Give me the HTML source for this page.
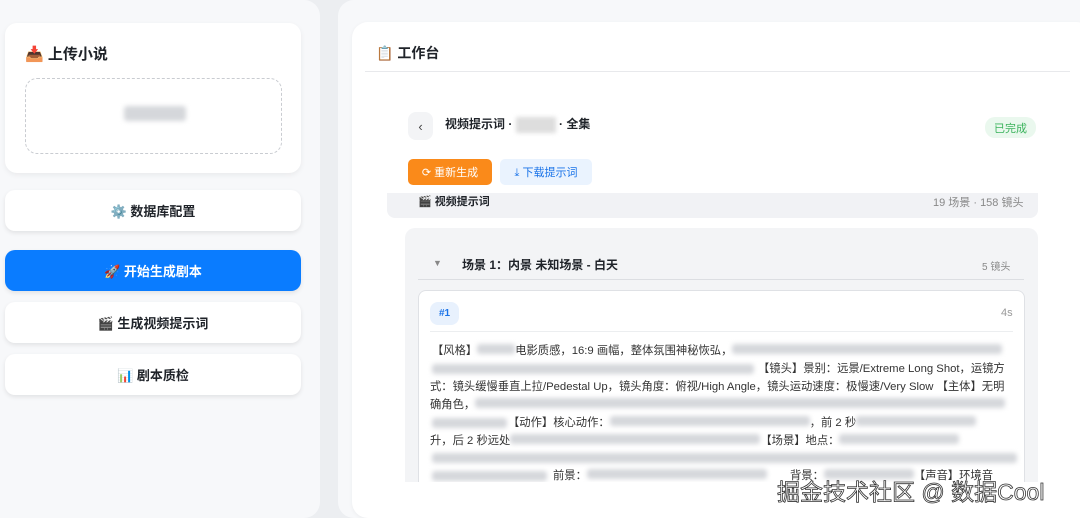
<!DOCTYPE html>
<html style="width:1080px;height:518px;overflow:hidden"><head><meta charset="utf-8"><style>
*{box-sizing:border-box;margin:0;padding:0}
body{width:1080px;height:518px;overflow:hidden;background:#eceef1;font-family:"Liberation Sans","Noto Sans CJK SC",sans-serif;color:#1f2329;position:relative}
.abs{position:absolute}
.left{left:0;top:0;width:320px;height:518px;background:#f7f8fa;border-radius:0 16px 16px 0}
.card{background:#fff;border-radius:12px;box-shadow:0 2px 6px rgba(0,0,0,.06)}
.btn{left:5px;width:296px;height:41px;border-radius:10px;background:#fff;box-shadow:0 2px 5px rgba(0,0,0,.09);font-size:13px;font-weight:bold;display:flex;align-items:center;justify-content:center;gap:5px}
.blur{background:#d5d7db;filter:blur(2.5px);border-radius:3px}
.txt{font-size:11.3px;color:#333;white-space:nowrap}
</style></head><body>
<div class="abs left"></div>
<div class="abs card" style="left:5px;top:23px;width:296px;height:150px"></div>
<div class="abs" style="left:25px;top:43px;font-size:15px;font-weight:bold">📥 上传小说</div>
<div class="abs" style="left:25px;top:78px;width:257px;height:76px;border:1px dashed #c9ccd1;border-radius:12px"></div>
<div class="abs blur" style="left:124px;top:106px;width:62px;height:15px"></div>
<div class="abs btn" style="top:190px">⚙️ 数据库配置</div>
<div class="abs btn" style="top:250px;background:#0a7cff;color:#fff">🚀 开始生成剧本</div>
<div class="abs btn" style="top:302px">🎬 生成视频提示词</div>
<div class="abs btn" style="top:354px">📊 剧本质检</div>

<div class="abs" style="left:338px;top:0;width:760px;height:518px;background:#f7f8fa;border-radius:16px"></div>
<div class="abs" style="left:352px;top:22px;width:740px;height:496px;background:#fff;border-radius:16px;box-shadow:0 1px 4px rgba(0,0,0,.05)"></div>
<div class="abs" style="left:376px;top:43px;font-size:14px;font-weight:bold">📋 工作台</div>
<div class="abs" style="left:365px;top:71px;width:705px;height:1px;background:#e8e9ec"></div>

<div class="abs" style="left:408px;top:112px;width:25px;height:28px;background:#f3f4f6;border-radius:8px;font-size:13px;display:flex;align-items:center;justify-content:center;color:#444">‹</div>
<div class="abs" style="left:445px;top:115px;font-size:12px;font-weight:bold">视频提示词 · <span style="display:inline-block;width:40px;height:16px;vertical-align:middle;background:#ddd;filter:blur(2px)"></span> · 全集</div>
<div class="abs" style="left:985px;top:117px;width:51px;height:21px;background:#eaf8ee;border-radius:10px;color:#3bb35c;font-size:11px;display:flex;align-items:center;justify-content:center">已完成</div>

<div class="abs" style="left:408px;top:159px;width:84px;height:26px;background:#fa8a1a;border-radius:5px;color:#fff;font-size:11px;display:flex;align-items:center;justify-content:center">⟳ 重新生成</div>
<div class="abs" style="left:500px;top:159px;width:92px;height:26px;background:#eaf3fe;border-radius:5px;color:#1a73e8;font-size:11px;display:flex;align-items:center;justify-content:center">⤓ 下载提示词</div>

<div class="abs" style="left:387px;top:193px;width:651px;height:25px;background:#f1f2f5;border-radius:0 0 8px 8px"></div>
<div class="abs" style="left:418px;top:193px;font-size:11px;font-weight:bold">🎬 视频提示词</div>
<div class="abs" style="left:933px;top:194px;font-size:11px;color:#888">19 场景 · 158 镜头</div>

<div class="abs" style="left:405px;top:228px;width:633px;height:254px;background:#f3f4f6;border-radius:10px 10px 0 0"></div>
<div class="abs" style="left:433px;top:258px;font-size:9px;color:#888">▼</div>
<div class="abs" style="left:462px;top:256px;font-size:12px;font-weight:bold">场景 1：内景 未知场景 - 白天</div>
<div class="abs" style="left:982px;top:258px;font-size:10px;color:#888">5 镜头</div>
<div class="abs" style="left:418px;top:279px;width:606px;height:1px;background:#dcdee2"></div>

<div class="abs" style="left:418px;top:290px;width:607px;height:192px;background:#fff;border:1px solid #dfe1e5;border-bottom:none;border-radius:8px 8px 0 0"></div>
<div class="abs" style="left:430px;top:302px;width:29px;height:23px;background:#e8f1fd;border-radius:8px;color:#1a73e8;font-size:10px;font-weight:bold;display:flex;align-items:center;justify-content:center">#1</div>
<div class="abs" style="left:1001px;top:307px;font-size:11px;color:#999">4s</div>
<div class="abs" style="left:430px;top:331px;width:583px;height:1px;background:#eceef0"></div>

<div class="abs txt" style="left:432px;top:342px">【风格】<span class="blur" style="display:inline-block;width:38px;height:10px"></span>电影质感，16:9 画幅，整体氛围神秘恢弘，<span class="blur" style="display:inline-block;width:270px;height:10px"></span></div>
<div class="abs blur" style="left:432px;top:364px;width:322px;height:10px"></div>
<div class="abs txt" style="left:758px;top:360px">【镜头】景别：远景/Extreme Long Shot，运镜方</div>
<div class="abs txt" style="left:430px;top:378px">式：镜头缓慢垂直上拉/Pedestal Up，镜头角度：俯视/High Angle，镜头运动速度：极慢速/Very Slow 【主体】无明</div>
<div class="abs txt" style="left:430px;top:396px">确角色，<span class="blur" style="display:inline-block;width:530px;height:10px"></span></div>
<div class="abs blur" style="left:432px;top:418px;width:75px;height:10px"></div>
<div class="abs txt" style="left:508px;top:414px">【动作】核心动作：<span class="blur" style="display:inline-block;width:200px;height:10px"></span>，前 2 秒<span class="blur" style="display:inline-block;width:120px;height:10px"></span></div>
<div class="abs txt" style="left:430px;top:432px">升，后 2 秒远处<span class="blur" style="display:inline-block;width:250px;height:10px"></span>【场景】地点：<span class="blur" style="display:inline-block;width:120px;height:10px"></span></div>
<div class="abs blur" style="left:432px;top:453px;width:585px;height:10px"></div>
<div class="abs blur" style="left:432px;top:471px;width:115px;height:10px"></div>
<div class="abs txt" style="left:553px;top:467px">前景：<span class="blur" style="display:inline-block;width:180px;height:10px"></span></div>
<div class="abs txt" style="left:790px;top:467px">背景：<span class="blur" style="display:inline-block;width:90px;height:10px"></span>【声音】环境音</div>

<div class="abs" style="left:405px;top:482px;width:675px;height:36px;background:#fff"></div>
<div class="abs" style="left:777px;top:473px;font-size:23px;color:#fff;-webkit-text-stroke:0.8px #333;white-space:nowrap">掘金技术社区 @ 数据Cool</div>
</body></html>
